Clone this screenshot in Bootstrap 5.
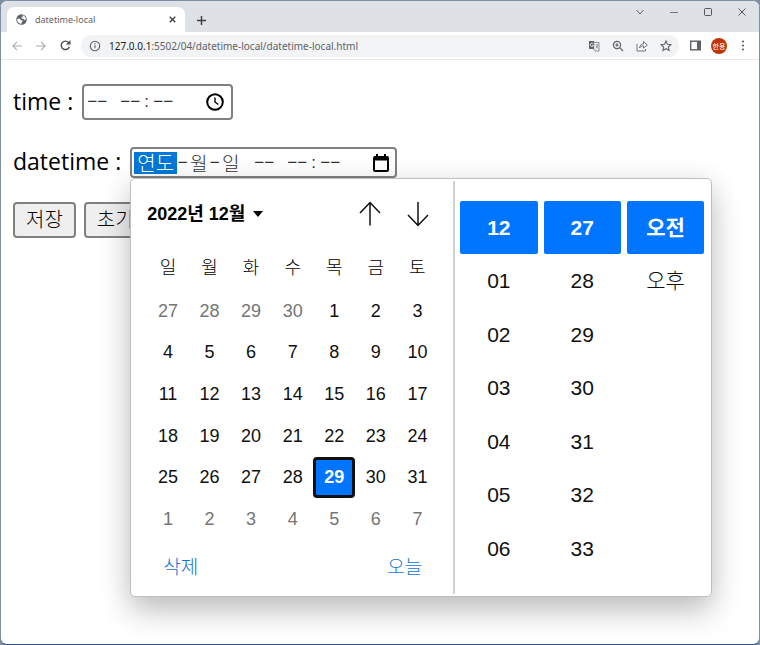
<!DOCTYPE html>
<html lang="ko">
<head>
<meta charset="utf-8">
<meta name="viewport" content="width=device-width, initial-scale=1">
<title>datetime-local</title>
<link href="https://cdn.jsdelivr.net/npm/bootstrap@5.3.0/dist/css/bootstrap.min.css" rel="stylesheet">
<style>
body{background:#7f8fa3;font-family:"Liberation Sans","Noto Sans CJK KR",sans-serif;color:#000;}
button,input{font-family:inherit;color:inherit;}
svg{display:block;flex:none;}
.plain{background:none;border:0;padding:0;}
.browser{min-height:100vh;background:#fff;border:1px solid #7f8fa3;border-bottom-color:#2b5797;border-radius:7px;overflow:hidden;}
.tabstrip{background:#dee1e6;height:31px;font-family:"Noto Sans","Noto Sans CJK KR",sans-serif;}
.tab-item{width:178px;height:25px;background:#fff;border-radius:7px 7px 0 0;margin-left:6px;padding:0 9px 0 9px;font-size:9px;color:#5f6368;}
.winctl{gap:24px;margin-right:12px;height:22px;}
.toolbar{height:28px;border-bottom:1px solid #e8eaed;padding:0 11px 0 11px;}
.nav-icons{gap:14px;margin-right:10px;}
.side-icons{gap:10px;margin-left:11px;}
.address{height:22px;background:#f1f3f4;border-radius:11px;padding:0 7px 0 8px;font-family:"Noto Sans",sans-serif;font-size:10px;color:#5f6368;}
.address b{font-weight:400;color:#202124;}
.avatar{width:16px;height:16px;border-radius:50%;background:#c0330b;color:#fff;font:7px "Noto Sans CJK KR",sans-serif;}
.page{padding:24px 12px 0;font-family:"Open Sans","Noto Sans CJK KR",sans-serif;}
.cap{font-size:23px;line-height:28px;margin-right:9px;padding-bottom:2px;}
.row-gap-top{margin-top:27px;}
.field{border:2px solid #808080;border-radius:4px;background:#fff;padding:0 3px;}
.field-time{width:151px;height:36px;}
.field-date{width:267px;height:31px;padding:0 2px;}
.seg{border:0;padding:0;background:none;height:22px;font:300 17px "Liberation Sans","Noto Sans CJK KR",sans-serif;color:#333;text-align:center;outline:0;}
.seg-dash{width:20px;}
.seg-char{width:21px;font-size:19px;}
.seg-year{width:43px;font-size:20px;background:#0078d7;color:#fff;}
.sep{font:17px/22px "Liberation Sans",sans-serif;width:13px;text-align:center;color:#333;}
.sep-short{width:11px;}
.act{height:36px;border:2px solid #808080;border-radius:4px;background:#efefef;font-size:20px;font-weight:300;line-height:30px;padding:0 11px;color:#000;}
.picker{position:absolute;top:100%;left:0;z-index:5;width:582px;background:#fff;border:1px solid #bfbfbf;border-radius:5px;box-shadow:0 14px 30px rgba(0,0,0,.24),0 0 30px rgba(0,0,0,.05);font-family:"Liberation Sans","Noto Sans CJK KR",sans-serif;}
.cal{width:324px;border-right:2px solid #d2d2d2;margin:2px 0;padding:12px 15px 6px 16px;}
.cal-title{font-size:18px;font-weight:700;line-height:42px;}
.cal-grid{width:100%;height:294px;margin-top:11px;table-layout:fixed;border-collapse:collapse;text-align:center;font-size:18px;line-height:20px;}
.cal-grid th{height:44px;font-weight:300;padding:0;color:#000;}
.cal-grid td{padding:0;height:41px;}
.cal-grid button{width:100%;height:41px;display:block;color:#101010;}
.cal-grid .out{color:#757575;}
.cal-grid .picked{background:#0075ff;color:#fff;font-weight:700;border:3px solid #101010;border-radius:4px;}
.cal-foot{font-size:19px;line-height:24px;padding:16px 16px 0;}
.cal-foot button{color:#0f75d0;font-weight:300;}
.times{display:grid;grid-template-columns:repeat(3,1fr);gap:0 6px;padding:22px 7px 21px 5px;font-size:21px;}
.tcol{display:grid;grid-template-rows:repeat(7,1fr);height:374px;}
.tcol button{border-radius:2px;color:#101010;font-weight:300;}
.tcol .on{background:#0075ff;color:#fff;font-weight:700;}
</style>
<script src="https://cdn.jsdelivr.net/npm/bootstrap@5.3.0/dist/js/bootstrap.bundle.min.js"></script>
</head>
<body>
<div class="browser d-flex flex-column">
<header>
<div class="tabstrip d-flex align-items-end">
<div class="tab-item d-flex align-items-center">
<svg width="11" height="11" viewBox="0 0 22 22"><circle cx="11" cy="11" r="10.500" fill="#5f6368"/><path d="M2.500 9.500h5l2.500 3h3v3l-2 1v3C6 20 1.500 15 2.500 9.500zM13 2.500c4 1 6.500 4 6.700 8l-2.700 2-2-3h-3l-2-2.500h3z" fill="#fff"/></svg>
<span class="ms-2 flex-grow-1">datetime-local</span>
<button class="plain" aria-label="탭 닫기"><svg width="7" height="7" viewBox="0 0 7 7" stroke="#3c4043" stroke-width="1.300"><path d="M.7.7l5.600 5.600M6.300.7L.7 6.300"/></svg></button>
</div>
<button class="plain align-self-center ms-2 ps-1 pt-2" aria-label="새 탭"><svg width="9" height="9" viewBox="0 0 9 9" stroke="#3c4043" stroke-width="1.500"><path d="M4.500 0v9M0 4.500h9"/></svg></button>
<div class="winctl d-flex align-items-center align-self-start ms-auto">
<button class="plain" aria-label="탭 검색"><svg width="10" height="10" viewBox="0 0 10 10" fill="none" stroke="#666"><path d="M1.500 3l3.500 4 3.500-4"/></svg></button>
<button class="plain" aria-label="최소화"><svg width="10" height="10" viewBox="0 0 10 10" stroke="#777"><path d="M1 5.500h8"/></svg></button>
<button class="plain" aria-label="최대화"><svg width="10" height="10" viewBox="0 0 10 10" fill="none" stroke="#555"><rect x="1.500" y="1.500" width="7" height="7" rx="1"/></svg></button>
<button class="plain" aria-label="닫기"><svg width="10" height="10" viewBox="0 0 10 10" stroke="#555"><path d="M1.500 1.500l7 7M8.500 1.500l-7 7"/></svg></button>
</div>
</div>
<div class="toolbar d-flex align-items-center">
<div class="nav-icons d-flex align-items-center">
<button class="plain" aria-label="뒤로"><svg width="10" height="10" viewBox="0 0 10 10" fill="none" stroke="#aaacaf" stroke-width="1.100"><path d="M10 5H1M5 .8L.8 5 5 9.200"/></svg></button>
<button class="plain" aria-label="앞으로"><svg width="10" height="10" viewBox="0 0 10 10" fill="none" stroke="#aaacaf" stroke-width="1.100"><path d="M0 5h9M5 .8L9.200 5 5 9.200"/></svg></button>
<button class="plain" aria-label="새로고침"><svg width="11" height="11" viewBox="0 0 11 11" fill="none" stroke="#4a4e52" stroke-width="1.400"><path d="M9.400 6.700A4.200 4.200 0 1 1 8.600 2.600L9.500 3.500"/><path d="M10.500 0v4.500H6z" fill="#4a4e52" stroke="none"/></svg></button>
</div>
<div class="address d-flex align-items-center flex-grow-1">
<svg width="12" height="12" viewBox="0 0 12 12" fill="none" stroke="#5f6368" stroke-width="1.100"><circle cx="6" cy="6" r="4.700"/><path d="M6 5.300v3M6 3.300v1.100"/></svg>
<span class="flex-grow-1 ms-1 ps-1 lh-1"><b>127.0.0.1</b>:5502/04/datetime-local/datetime-local.html</span>
<div class="d-flex align-items-center gap-2">
<button class="plain me-1" aria-label="번역"><svg width="12" height="12" viewBox="0 0 12 12"><path d="M1 1h5l2 8H1.500L1 8.500z" fill="#5f6368"/><path d="M6.500 2.500H11v8.500H7l-1-2" fill="#f1f3f4" stroke="#777" stroke-width=".8"/><path d="M5.400 3.900a1.700 1.700 0 1 0 .2 1.400H4.200" stroke="#fff" stroke-width=".8" fill="none"/><path d="M7.500 5h3M9 4.300V5M8 8.500l2-3M8 6l2 2.500" stroke="#777" stroke-width=".7" fill="none"/></svg></button>
<button class="plain me-1" aria-label="확대"><svg width="12" height="12" viewBox="0 0 12 12" fill="none" stroke="#5f6368" stroke-width="1.200"><circle cx="5" cy="5" r="3.600"/><path d="M7.700 7.700L11 11M3.300 5h3.400M5 3.300v3.400"/></svg></button>
<button class="plain me-1" aria-label="공유"><svg width="12" height="12" viewBox="0 0 12 12" fill="none" stroke="#777" stroke-width="1"><path d="M1 4v7h8.500V9M3.500 8c.2-2.500 2-4 4-4V1.500L11.300 5 7.500 8.200V6c-2 0-3 .5-4 2z"/></svg></button>
<button class="plain" aria-label="북마크"><svg width="12" height="12" viewBox="0 0 12 12" fill="none" stroke="#5f6368" stroke-width="1.100"><path d="M6 1l1.400 3.300 3.600.3-2.700 2.400.8 3.500L6 8.700l-3.100 1.800.8-3.500L1 4.600l3.600-.3z"/></svg></button>
</div>
</div>
<div class="side-icons d-flex align-items-center">
<button class="plain" aria-label="측면 패널"><svg width="11" height="11" viewBox="0 0 11 11"><rect x=".7" y="1.200" width="9.600" height="8.600" fill="#fff" stroke="#5f6368" stroke-width="1.400"/><path d="M7 1h4v9H7z" fill="#5f6368"/></svg></button>
<button class="plain avatar d-flex align-items-center justify-content-center">한용</button>
<button class="plain" aria-label="메뉴"><svg width="11" height="11" viewBox="0 0 11 11" fill="#5f6368"><circle cx="6" cy="1.500" r="1.100"/><circle cx="6" cy="5.500" r="1.100"/><circle cx="6" cy="9.500" r="1.100"/></svg></button>
</div>
</div>
</header>
<main class="page">
<div class="d-flex align-items-center">
<label class="cap" for="t1">time :</label>
<div class="field field-time d-flex align-items-center">
<input class="seg seg-dash" id="t1" value="−−" aria-label="오전/오후"><span class="sep"></span><input class="seg seg-dash" value="−−" aria-label="시"><span class="sep">:</span><input class="seg seg-dash" value="−−" aria-label="분">
<button class="plain ms-auto me-1" aria-label="시간 선택"><svg width="18" height="18" viewBox="0 0 18 18" fill="none" stroke="#000" stroke-width="2"><circle cx="9" cy="9" r="7.800"/><path d="M9 4.500V9l3.300 2.500" stroke-width="1.400"/></svg></button>
</div>
</div>
<div class="d-flex align-items-start row-gap-top">
<label class="cap" for="d1">datetime :</label>
<div class="position-relative">
<div class="field field-date d-flex align-items-center">
<input class="seg seg-year" id="d1" value="연도" aria-label="연도"><span class="sep sep-short">−</span><input class="seg seg-char" value="월" aria-label="월"><span class="sep sep-short">−</span><input class="seg seg-char" value="일" aria-label="일"><span class="sep"></span><input class="seg seg-dash" value="−−" aria-label="오전/오후"><span class="sep"></span><input class="seg seg-dash" value="−−" aria-label="시"><span class="sep">:</span><input class="seg seg-dash" value="−−" aria-label="분">
<button class="plain ms-auto me-1" aria-label="날짜 선택"><svg width="16" height="18" viewBox="0 0 16 18"><path d="M2 2h1V0h2v2h6V0h2v2h1q2 0 2 2v12q0 2-2 2H2q-2 0-2-2V4q0-2 2-2zm0 4.500V16h12V6.500z" fill="#000" fill-rule="evenodd"/></svg></button>
</div>
<section class="picker d-flex" aria-label="날짜 선택기">
<div class="cal">
<div class="d-flex align-items-center">
<button class="plain cal-title d-flex align-items-center">2022년 12월<svg class="ms-2" width="10" height="6" viewBox="0 0 10 6"><path d="M0 0h10L5 6z"/></svg></button>
<button class="plain ms-auto" aria-label="이전 달"><svg width="24" height="26" viewBox="0 0 24 26" fill="none" stroke="#101010" stroke-width="1.500"><path d="M12 1.500v23M2 12L12 1.500 22 12"/></svg></button>
<button class="plain ms-4 me-2" aria-label="다음 달"><svg width="24" height="26" viewBox="0 0 24 26" fill="none" stroke="#101010" stroke-width="1.500"><path d="M12 1v23M2 14l10 10.500L22 14"/></svg></button>
</div>
<table class="cal-grid">
<thead><tr><th>일</th><th>월</th><th>화</th><th>수</th><th>목</th><th>금</th><th>토</th></tr></thead>
<tbody id="days"></tbody>
</table>
<div class="cal-foot d-flex justify-content-between"><button class="plain">삭제</button><button class="plain">오늘</button></div>
</div>
<div class="times flex-grow-1" id="times"></div>
</section>
</div>
</div>
<div class="d-flex gap-2 mt-4">
<button class="act">저장</button><button class="act">초기화</button>
</div>
</main>
</div>
<script>
const body = document.getElementById('days');
for (let r = 0; r < 6; r++) {
  const tr = body.insertRow();
  for (let c = 0; c < 7; c++) {
    const d = new Date(2022, 10, 27 + r * 7 + c);
    const b = document.createElement('button');
    b.textContent = d.getDate();
    b.className = 'plain';
    if (d.getMonth() !== 11) b.classList.add('out');
    else if (d.getDate() === 29) b.classList.add('picked');
    tr.insertCell().append(b);
  }
}
const columns = [['12','01','02','03','04','05','06'], ['27','28','29','30','31','32','33'], ['오전','오후']];
for (const list of columns) {
  const col = document.createElement('div');
  col.className = 'tcol';
  list.forEach((t, i) => {
    const b = document.createElement('button');
    b.textContent = t;
    b.className = i ? 'plain' : 'plain on';
    col.append(b);
  });
  document.getElementById('times').append(col);
}
</script>
</body>
</html>
